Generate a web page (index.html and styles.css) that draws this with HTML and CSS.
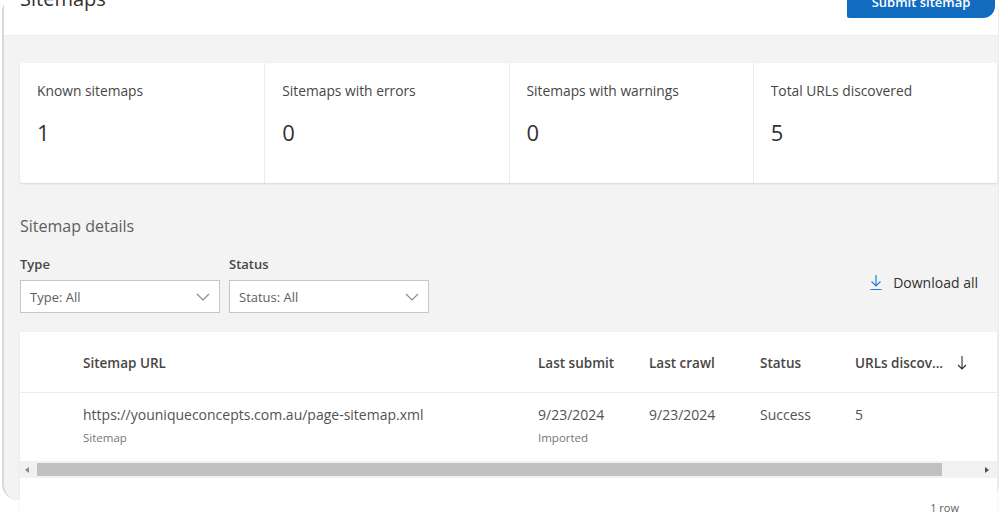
FILE: index.html
```html
<!DOCTYPE html>
<html lang="en">
<head>
<meta charset="utf-8">
<title>Sitemaps</title>
<link rel="stylesheet" href="styles.css">
</head>
<body>
<div class="frame">
  <header class="header">
    <h1 class="title">Sitemaps</h1>
    <button class="submit">Submit sitemap</button>
  </header>
  <main class="content">
    <section class="stats">
      <div class="stat"><div class="stat-label">Known sitemaps</div><div class="stat-value">1</div></div>
      <div class="stat"><div class="stat-label">Sitemaps with errors</div><div class="stat-value">0</div></div>
      <div class="stat"><div class="stat-label">Sitemaps with warnings</div><div class="stat-value">0</div></div>
      <div class="stat"><div class="stat-label">Total URLs discovered</div><div class="stat-value">5</div></div>
    </section>

    <h2 class="section-title">Sitemap details</h2>

    <div class="filters">
      <div class="filter">
        <label class="filter-label">Type</label>
        <div class="dropdown"><span>Type: All</span>
          <svg class="chev" width="14" height="8" viewBox="0 0 14 8"><path d="M1 1l6 6 6-6" fill="none" stroke="#8a8886" stroke-width="1.1"/></svg>
        </div>
      </div>
      <div class="filter">
        <label class="filter-label">Status</label>
        <div class="dropdown"><span>Status: All</span>
          <svg class="chev" width="14" height="8" viewBox="0 0 14 8"><path d="M1 1l6 6 6-6" fill="none" stroke="#8a8886" stroke-width="1.1"/></svg>
        </div>
      </div>
      <div class="download">
        <svg width="14" height="17" viewBox="0 0 14 17"><path d="M7 1v11M2.5 7.5L7 12l4.5-4.5M1.5 15.5h11" fill="none" stroke="#2b7cd3" stroke-width="1.2"/></svg>
        <span>Download all</span>
      </div>
    </div>

    <section class="table">
      <div class="row head">
        <div></div>
        <div>Sitemap URL</div>
        <div>Last submit</div>
        <div>Last crawl</div>
        <div>Status</div>
        <div class="sortcol">URLs discov...
          <svg width="10" height="16" viewBox="0 0 10 16"><path d="M5 1v13M1 10l4 4 4-4" fill="none" stroke="#323130" stroke-width="1.1"/></svg>
        </div>
      </div>
      <div class="row body">
        <div></div>
        <div><div class="cell-main">https://youniqueconcepts.com.au/page-sitemap.xml</div><div class="cell-sub">Sitemap</div></div>
        <div><div class="cell-main">9/23/2024</div><div class="cell-sub">Imported</div></div>
        <div><div class="cell-main">9/23/2024</div></div>
        <div><div class="cell-main">Success</div></div>
        <div><div class="cell-main">5</div></div>
      </div>
      <div class="scrollbar">
        <span class="arrow left"></span>
        <div class="thumb"></div>
        <span class="arrow right"></span>
      </div>
      <div class="footer">1 row</div>
    </section>
  </main>
</div>
</body>
</html>
```

FILE: styles.css
```css
* { box-sizing: border-box; }

html, body {
  margin: 0;
  padding: 0;
  background: #ffffff;
  height: 512px;
  overflow: hidden;
}

body {
  font-family: "Open Sans", "Noto Sans", sans-serif;
  color: #323130;
}

.frame {
  margin: 12px 3px 0 2px;
  height: 500px;
  border-left: 2px solid #d9d9d9;
  border-right: 1px solid #ececec;
  border-radius: 10px 10px 16px 16px;
  background: #f3f3f3;
}

.header {
  margin-top: -12px;
  height: 36px;
  background: #ffffff;
  display: flex;
  justify-content: space-between;
  align-items: flex-start;
  padding: 0 3px 0 16px;
  border-bottom: 1px solid #ececec;
}

.title {
  margin: -15px 0 0 0;
  font-size: 20px;
  line-height: 28px;
  font-weight: 400;
  color: #323130;
}

.submit {
  margin-top: -14px;
  width: 148px;
  height: 32px;
  border: none;
  background: #116bbe;
  color: #ffffff;
  font-family: inherit;
  font-weight: 600;
  font-size: 13px;
  padding: 0;
  border-radius: 2px 2px 12px 2px;
}

.content {
  padding: 27px 1px 0 16px;
}

.stats {
  display: grid;
  grid-template-columns: repeat(4, 1fr);
  height: 120px;
  background: #ffffff;
  box-shadow: 0 1px 2px rgba(0,0,0,0.12);
  border-radius: 2px;
}

.stat {
  padding: 19px 17px;
  border-left: 1px solid #ebebeb;
}
.stat:first-child { border-left: none; }

.stat-label {
  font-size: 13.8px;
  line-height: 18px;
  color: #484644;
}

.stat-value {
  margin-top: 18px;
  font-size: 22px;
  line-height: 28px;
  color: #323130;
}

.section-title {
  margin: 33px 0 0 0;
  font-size: 16px;
  line-height: 20px;
  font-weight: 400;
  color: #605e5c;
}

.filters {
  display: flex;
  align-items: flex-end;
  gap: 9px;
  margin-top: 19px;
}

.filter {
  display: flex;
  flex-direction: column;
  width: 200px;
}

.filter-label {
  font-size: 13px;
  font-weight: 600;
  line-height: 18px;
  color: #484644;
  margin-bottom: 7px;
}

.dropdown {
  height: 33px;
  background: #ffffff;
  border: 1px solid #c8c6c4;
  display: flex;
  align-items: center;
  justify-content: space-between;
  padding: 0 9px 0 9px;
  font-size: 13px;
  color: #605e5c;
}

.download {
  margin-left: auto;
  align-self: flex-start;
  margin-top: 18px;
  margin-right: 19px;
  display: flex;
  align-items: center;
  gap: 10px;
  font-size: 14px;
  color: #323130;
}

.table {
  margin-top: 19px;
  background: #ffffff;
  box-shadow: 0 1px 2px rgba(0,0,0,0.10);
  height: 200px;
}

.row {
  display: grid;
  grid-template-columns: 63px 455px 111px 111px 95px 1fr;
}

.row.head {
  height: 61px;
  align-items: center;
  padding-top: 1px;
  font-size: 13.5px;
  font-weight: 600;
  color: #484644;
  border-bottom: 1px solid #ebebeb;
}

.sortcol {
  display: flex;
  align-items: center;
  gap: 14px;
}

.row.body {
  height: 68px;
  padding-top: 12px;
  font-size: 14px;
}

.cell-main {
  line-height: 20px;
  color: #545250;
}

.cell-sub {
  margin-top: 5px;
  font-size: 11.5px;
  line-height: 16px;
  color: #767676;
}

.scrollbar {
  height: 17px;
  background: #f1f1f1;
  display: flex;
  align-items: center;
  padding: 0 8px 0 5px;
}

.thumb {
  height: 13px;
  background: #c1c1c1;
  margin-left: 8px;
  width: 905px;
}

.arrow {
  width: 0;
  height: 0;
  border-top: 3px solid transparent;
  border-bottom: 3px solid transparent;
}
.arrow.left { border-right: 4px solid #8a8a8a; }
.arrow.right { border-left: 4px solid #505050; margin-left: auto; }

.footer {
  text-align: right;
  padding: 22px 38px 0 0;
  font-size: 11px;
  color: #605e5c;
}
```
